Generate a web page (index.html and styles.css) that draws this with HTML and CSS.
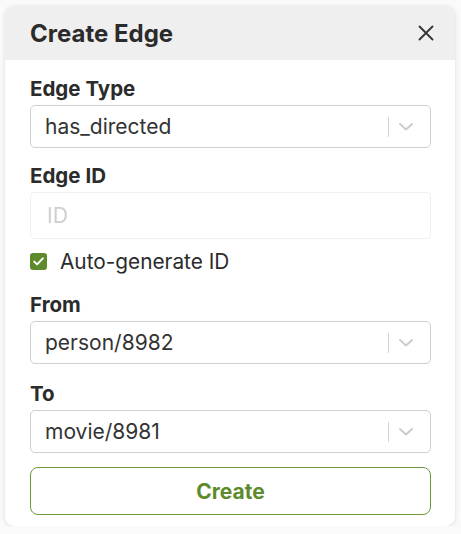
FILE: index.html
```html
<!DOCTYPE html>
<html>
<head>
<meta charset="utf-8">
<link rel="stylesheet" href="styles.css">
</head>
<body>
<div class="card">
  <div class="header">
    <h1 class="title">Create Edge</h1>
    <button class="close" aria-label="Close">
      <svg width="16" height="16" viewBox="0 0 16 16"><path d="M1.5 1.5 L14.5 14.5 M14.5 1.5 L1.5 14.5" stroke="#333" stroke-width="1.8" stroke-linecap="round" fill="none"/></svg>
    </button>
  </div>
  <div class="body">
    <div class="group">
      <div class="label">Edge Type</div>
      <div class="select">
        <span class="value">has_directed</span>
        <span class="sep"></span>
        <svg class="chev" width="16" height="10" viewBox="0 0 16 10"><path d="M2 2 L8 7.5 L14 2" stroke="#cccccc" stroke-width="2" fill="none" stroke-linecap="round" stroke-linejoin="round"/></svg>
      </div>
    </div>
    <div class="group gap-id">
      <div class="label">Edge ID</div>
      <div class="input"><span class="placeholder">ID</span></div>
    </div>
    <div class="check-row">
      <span class="checkbox">
        <svg width="11" height="9" viewBox="0 0 11 9"><path d="M1.2 4.6 L4.1 7.4 L9.8 1.4" stroke="#fff" stroke-width="2" fill="none" stroke-linecap="round" stroke-linejoin="round"/></svg>
      </span>
      <span class="check-label">Auto-generate ID</span>
    </div>
    <div class="group gap-from">
      <div class="label">From</div>
      <div class="select">
        <span class="value">person/8982</span>
        <span class="sep"></span>
        <svg class="chev" width="16" height="10" viewBox="0 0 16 10"><path d="M2 2 L8 7.5 L14 2" stroke="#cccccc" stroke-width="2" fill="none" stroke-linecap="round" stroke-linejoin="round"/></svg>
      </div>
    </div>
    <div class="group gap-to">
      <div class="label">To</div>
      <div class="select">
        <span class="value">movie/8981</span>
        <span class="sep"></span>
        <svg class="chev" width="16" height="10" viewBox="0 0 16 10"><path d="M2 2 L8 7.5 L14 2" stroke="#cccccc" stroke-width="2" fill="none" stroke-linecap="round" stroke-linejoin="round"/></svg>
      </div>
    </div>
    <button class="create">Create</button>
  </div>
</div>
</body>
</html>
```
FILE: styles.css
```css
html, body {
  margin: 0;
  padding: 0;
  background: #fafafa;
}
body {
  font-family: Inter, "Noto Sans", sans-serif;
  color: #2b2b2b;
  padding: 6px 6px 0 5px;
}
.card {
  width: 450px;
  background: #fff;
  border-radius: 9px;
  box-shadow: 0 1px 5px rgba(0,0,0,0.10), 0 0 2px rgba(0,0,0,0.06);
  overflow: hidden;
}
.header {
  height: 54px;
  background: #efefef;
  display: flex;
  align-items: center;
  justify-content: space-between;
  padding: 0 19px 0 25px;
}
.title {
  margin: 0;
  font-size: 24px;
  font-weight: 700;
  color: #2b2b2b;
}
.close {
  border: 0;
  background: transparent;
  padding: 0;
  width: 20px;
  height: 20px;
  display: flex;
  align-items: center;
  justify-content: center;
}
.body {
  padding: 17px 24px 11px 25px;
  display: flex;
  flex-direction: column;
}
.group {
  display: flex;
  flex-direction: column;
}
.gap-id { margin-top: 16px; }
.gap-from { margin-top: 20px; }
.gap-to { margin-top: 18px; }
.label {
  font-size: 20.5px;
  font-weight: 700;
  line-height: 24px;
  margin-bottom: 4px;
  color: #2b2b2b;
}
.select {
  height: 41px;
  border: 1px solid #cfcfcf;
  border-radius: 5px;
  display: flex;
  align-items: center;
  padding-left: 14px;
  padding-right: 16px;
}
.value {
  flex: 1;
  font-size: 21px;
  color: #333;
}
.sep {
  width: 1px;
  height: 20px;
  background: #d4d4d4;
  margin-right: 9px;
}
.chev {
  display: block;
}
.input {
  height: 45px;
  border: 1px solid #f0f0f0;
  border-radius: 4px;
  display: flex;
  align-items: center;
  padding-left: 16px;
}
.placeholder {
  font-size: 21px;
  color: #cfcfcf;
}
.check-row {
  display: flex;
  align-items: center;
  height: 24px;
  margin-top: 10px;
}
.checkbox {
  width: 17px;
  height: 17px;
  border-radius: 3px;
  background: #5d8a2b;
  display: flex;
  align-items: center;
  justify-content: center;
  margin-right: 13px;
}
.checkbox svg { display: block; }
.check-label {
  font-size: 20.8px;
  color: #2b2b2b;
}
.create {
  margin-top: 14px;
  height: 48px;
  border: 1.3px solid #6a9a3a;
  border-radius: 8px;
  background: #fff;
  color: #5d8a2b;
  font-family: Inter, "Noto Sans", sans-serif;
  font-size: 21px;
  font-weight: 700;
}
```
